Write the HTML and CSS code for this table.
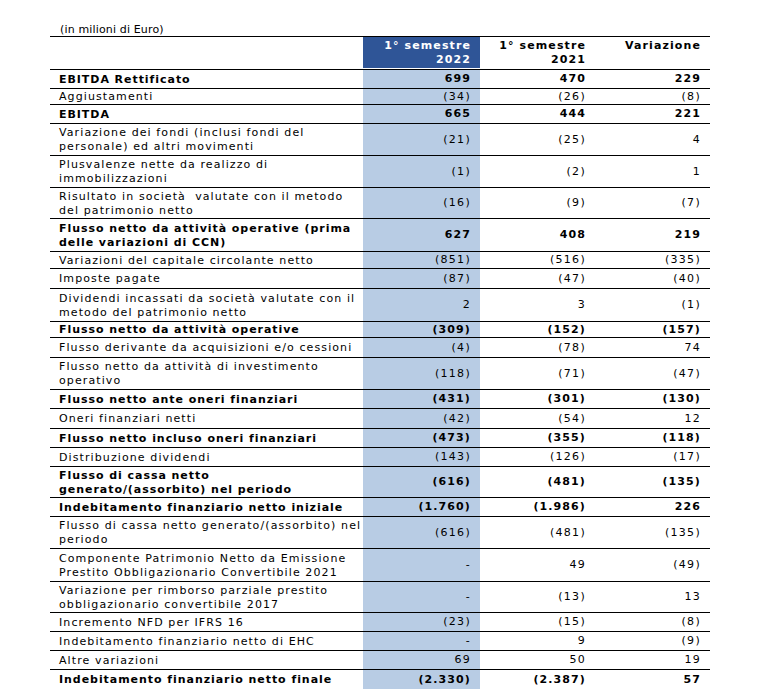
FILE: index.html
```html
<!DOCTYPE html>
<html lang="it">
<head>
<meta charset="utf-8">
<link rel="stylesheet" href="styles.css">
</head>
<body>
<div class="sheet">
  <div class="caption">(in milioni di Euro)</div>
  <div class="table">
    <div class="row head h33">
      <div class="lab"></div>
      <div class="num cur">1° semestre<br>2022</div>
      <div class="num">1° semestre<br>2021</div>
      <div class="num">Variazione</div>
    </div>
    <div class="row b h19"><div class="lab">EBITDA Rettificato</div><div class="num cur">699</div><div class="num">470</div><div class="num">229</div></div>
    <div class="row h16"><div class="lab">Aggiustamenti</div><div class="num cur">(34)</div><div class="num">(26)</div><div class="num">(8)</div></div>
    <div class="row b h19"><div class="lab">EBITDA</div><div class="num cur">665</div><div class="num">444</div><div class="num">221</div></div>
    <div class="row h32"><div class="lab">Variazione dei fondi (inclusi fondi del<br>personale) ed altri movimenti</div><div class="num cur">(21)</div><div class="num">(25)</div><div class="num">4</div></div>
    <div class="row h32"><div class="lab">Plusvalenze nette da realizzo di<br>immobilizzazioni</div><div class="num cur">(1)</div><div class="num">(2)</div><div class="num">1</div></div>
    <div class="row h31"><div class="lab">Risultato in società&nbsp; valutate con il metodo<br>del patrimonio netto</div><div class="num cur">(16)</div><div class="num">(9)</div><div class="num">(7)</div></div>
    <div class="row b h33"><div class="lab">Flusso netto da attività operative (prima<br>delle variazioni di CCN)</div><div class="num cur">627</div><div class="num">408</div><div class="num">219</div></div>
    <div class="row h17"><div class="lab">Variazioni del capitale circolante netto</div><div class="num cur">(851)</div><div class="num">(516)</div><div class="num">(335)</div></div>
    <div class="row h20"><div class="lab">Imposte pagate</div><div class="num cur">(87)</div><div class="num">(47)</div><div class="num">(40)</div></div>
    <div class="row h33"><div class="lab">Dividendi incassati da società valutate con il<br>metodo del patrimonio netto</div><div class="num cur">2</div><div class="num">3</div><div class="num">(1)</div></div>
    <div class="row b h16"><div class="lab">Flusso netto da attività operative</div><div class="num cur">(309)</div><div class="num">(152)</div><div class="num">(157)</div></div>
    <div class="row h20"><div class="lab">Flusso derivante da acquisizioni e/o cessioni</div><div class="num cur">(4)</div><div class="num">(78)</div><div class="num">74</div></div>
    <div class="row h32"><div class="lab">Flusso netto da attività di investimento<br>operativo</div><div class="num cur">(118)</div><div class="num">(71)</div><div class="num">(47)</div></div>
    <div class="row b h19"><div class="lab">Flusso netto ante oneri finanziari</div><div class="num cur">(431)</div><div class="num">(301)</div><div class="num">(130)</div></div>
    <div class="row h20"><div class="lab">Oneri finanziari netti</div><div class="num cur">(42)</div><div class="num">(54)</div><div class="num">12</div></div>
    <div class="row b h19"><div class="lab">Flusso netto incluso oneri finanziari</div><div class="num cur">(473)</div><div class="num">(355)</div><div class="num">(118)</div></div>
    <div class="row h19"><div class="lab">Distribuzione dividendi</div><div class="num cur">(143)</div><div class="num">(126)</div><div class="num">(17)</div></div>
    <div class="row b h31"><div class="lab">Flusso di cassa netto<br>generato/(assorbito) nel periodo</div><div class="num cur">(616)</div><div class="num">(481)</div><div class="num">(135)</div></div>
    <div class="row b h19"><div class="lab">Indebitamento finanziario netto iniziale</div><div class="num cur">(1.760)</div><div class="num">(1.986)</div><div class="num">226</div></div>
    <div class="row h32"><div class="lab">Flusso di cassa netto generato/(assorbito) nel<br>periodo</div><div class="num cur">(616)</div><div class="num">(481)</div><div class="num">(135)</div></div>
    <div class="row h33"><div class="lab">Componente Patrimonio Netto da Emissione<br>Prestito Obbligazionario Convertibile 2021</div><div class="num cur">-</div><div class="num">49</div><div class="num">(49)</div></div>
    <div class="row h31"><div class="lab">Variazione per rimborso parziale prestito<br>obbligazionario convertibile 2017</div><div class="num cur">-</div><div class="num">(13)</div><div class="num">13</div></div>
    <div class="row h19"><div class="lab">Incremento NFD per IFRS 16</div><div class="num cur">(23)</div><div class="num">(15)</div><div class="num">(8)</div></div>
    <div class="row h19"><div class="lab">Indebitamento finanziario netto di EHC</div><div class="num cur">-</div><div class="num">9</div><div class="num">(9)</div></div>
    <div class="row h19"><div class="lab">Altre variazioni</div><div class="num cur">69</div><div class="num">50</div><div class="num">19</div></div>
    <div class="row b last h19"><div class="lab">Indebitamento finanziario netto finale</div><div class="num cur">(2.330)</div><div class="num">(2.387)</div><div class="num">57</div></div>
  </div>
</div>
</body>
</html>
```

FILE: styles.css
```css
html, body {
  margin: 0;
  padding: 0;
  background: #ffffff;
}
body {
  font-family: "DejaVu Sans", Verdana, sans-serif;
  font-size: 11px;
  color: #000;
}
.sheet {
  padding: 24px 0 0 50px;
  width: 660px;
}
.caption {
  font-size: 11px;
  line-height: 12px;
  padding-left: 10px;
  letter-spacing: 0.15px;
  white-space: nowrap;
}
.table {
  border-top: 1px solid #000;
}
.row {
  display: grid;
  grid-template-columns: 313px 117px 115px 115px;
  border-bottom: 1px solid #000;
  box-sizing: border-box;
  line-height: 14px;
}
.row.last { border-bottom: none; }
.h16 { height: 16px; }
.h17 { height: 17px; }
.h19 { height: 19px; }
.h20 { height: 20px; }
.h31 { height: 31px; }
.h32 { height: 32px; }
.h33 { height: 33px; }
.b { font-weight: bold; }
.lab {
  padding: 1px 0 0 9px;
  display: flex;
  align-items: center;
  white-space: nowrap;
  letter-spacing: 1.1px;
}
.b .lab { letter-spacing: 0.95px; }
.num {
  padding: 0 9px 0 0;
  display: flex;
  align-items: center;
  justify-content: flex-end;
  text-align: right;
  white-space: nowrap;
  letter-spacing: 1.3px;
}
.b .num, .head .num { letter-spacing: 1.1px; }
.cur { background: #b8cce4; }
.head { font-weight: bold; }
.head .num { align-items: flex-start; padding-top: 2px; }
.head .cur {
  background: #2f5597;
  color: #fff;
  margin-bottom: 1px;
}
```
